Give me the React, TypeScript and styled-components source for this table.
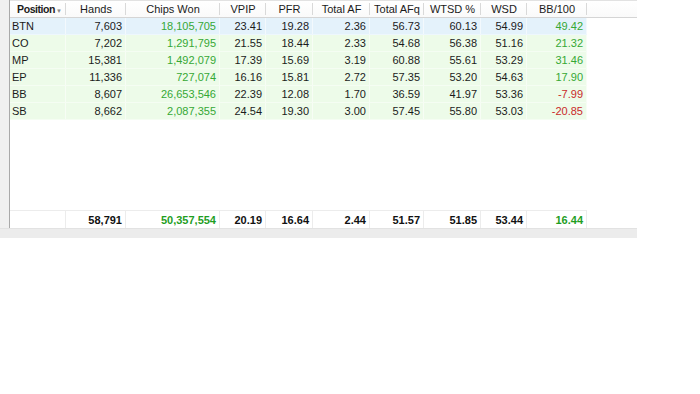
import React from "react";
import styled, { createGlobalStyle } from "styled-components";

const GlobalStyle = createGlobalStyle`
  html, body {
    margin: 0;
    padding: 0;
    background: #ffffff;
  }
  body {
    font-family: "Liberation Sans Narrow", "Liberation Sans", Arial, sans-serif;
    font-size: 11px;
    color: #1b1b1b;
  }
`;

const DATA_COLUMNS = "56px 60px 94px 46px 47px 57px 54px 57px 46px 60px";

const Frame = styled.div`
  width: 637px;
  display: flex;
  flex-direction: column;
`;

const Body = styled.div`
  display: flex;
  height: 228px;
`;

const Gutter = styled.div`
  width: 9px;
  background: #f0f0f0;
  border-right: 1px solid #a9a9a9;
`;

const Grid = styled.div`
  flex: 1;
  display: flex;
  flex-direction: column;
  align-items: flex-start;
`;

const HeaderRow = styled.div`
  align-self: stretch;
  display: grid;
  grid-template-columns: ${DATA_COLUMNS} 1fr;
  height: 18px;
  box-sizing: border-box;
  border-top: 1px solid #e2e2e2;
  border-bottom: 1px solid #d5d5d5;
  background: linear-gradient(#ffffff, #fafafa);
`;

const HeaderCell = styled.div<{ $sorted?: boolean; $last?: boolean }>`
  position: relative;
  display: flex;
  align-items: center;
  justify-content: center;
  white-space: nowrap;
  color: #1b1b1b;
  font-weight: ${(p) => (p.$sorted ? "bold" : "normal")};
  font-size: ${(p) => (p.$sorted ? "10.5px" : "11px")};
  letter-spacing: ${(p) => (p.$sorted ? "-0.45px" : "0")};
  padding-left: ${(p) => (p.$sorted ? "3px" : "0")};
  &::after {
    content: "";
    display: ${(p) => (p.$last ? "none" : "block")};
    position: absolute;
    right: 0;
    top: 2px;
    bottom: 2px;
    width: 1px;
    background: #d9d9d9;
  }
`;

const SortArrow = styled.span`
  font-size: 6px;
  font-weight: normal;
  letter-spacing: 0;
  color: #8a8a8a;
  margin-left: 1px;
  margin-top: 3px;
`;

const DataRow = styled.div<{ $selected?: boolean }>`
  display: grid;
  grid-template-columns: ${DATA_COLUMNS};
  height: 17px;
  box-sizing: border-box;
  background: ${(p) => (p.$selected ? "#e4f2fb" : "#edfbe9")};
  border-bottom: 1px solid ${(p) => (p.$selected ? "#eef7fd" : "#f5fdf3")};
`;

const Cell = styled.div<{ $align?: "left" | "right"; $tone?: "pos" | "neg" | "plain" }>`
  display: flex;
  align-items: center;
  justify-content: ${(p) => (p.$align === "left" ? "flex-start" : "flex-end")};
  padding: 0 3px 0 2px;
  border-right: 1px solid rgba(255, 255, 255, 0.55);
  white-space: nowrap;
  color: ${(p) => (p.$tone === "pos" ? "#35a835" : p.$tone === "neg" ? "#c92a2a" : "#1b1b1b")};
`;

const Spacer = styled.div`
  flex: 1;
`;

const FooterRow = styled.div`
  display: grid;
  grid-template-columns: ${DATA_COLUMNS};
  height: 17px;
  border-top: 1px solid #ececec;
  background: #ffffff;
`;

const FooterCell = styled(Cell)`
  font-weight: bold;
  color: ${(p) => (p.$tone === "pos" ? "#1f9e1f" : "#111111")};
  border-right: 1px solid #ececec;
`;

const ScrollBar = styled.div`
  height: 9px;
  background: #ececec;
  border-top: 1px solid #e2e2e2;
`;

type Tone = "pos" | "neg" | "plain";

interface IRow {
  position: string;
  hands: string;
  chips: string;
  vpip: string;
  pfr: string;
  af: string;
  afq: string;
  wtsd: string;
  wsd: string;
  bb: string;
}

const headers = [
  "Hands",
  "Chips Won",
  "VPIP",
  "PFR",
  "Total AF",
  "Total AFq",
  "WTSD %",
  "WSD",
  "BB/100",
];

const rows: IRow[] = [
  { position: "BTN", hands: "7,603", chips: "18,105,705", vpip: "23.41", pfr: "19.28", af: "2.36", afq: "56.73", wtsd: "60.13", wsd: "54.99", bb: "49.42" },
  { position: "CO", hands: "7,202", chips: "1,291,795", vpip: "21.55", pfr: "18.44", af: "2.33", afq: "54.68", wtsd: "56.38", wsd: "51.16", bb: "21.32" },
  { position: "MP", hands: "15,381", chips: "1,492,079", vpip: "17.39", pfr: "15.69", af: "3.19", afq: "60.88", wtsd: "55.61", wsd: "53.29", bb: "31.46" },
  { position: "EP", hands: "11,336", chips: "727,074", vpip: "16.16", pfr: "15.81", af: "2.72", afq: "57.35", wtsd: "53.20", wsd: "54.63", bb: "17.90" },
  { position: "BB", hands: "8,607", chips: "26,653,546", vpip: "22.39", pfr: "12.08", af: "1.70", afq: "36.59", wtsd: "41.97", wsd: "53.36", bb: "-7.99" },
  { position: "SB", hands: "8,662", chips: "2,087,355", vpip: "24.54", pfr: "19.30", af: "3.00", afq: "57.45", wtsd: "55.80", wsd: "53.03", bb: "-20.85" },
];

const totals: IRow = {
  position: "",
  hands: "58,791",
  chips: "50,357,554",
  vpip: "20.19",
  pfr: "16.64",
  af: "2.44",
  afq: "51.57",
  wtsd: "51.85",
  wsd: "53.44",
  bb: "16.44",
};

const tone = (value: string): Tone => (value.startsWith("-") ? "neg" : "pos");

export default function App() {
  return (
    <Frame>
      <GlobalStyle />
      <Body>
        <Gutter />
        <Grid>
          <HeaderRow>
            <HeaderCell $sorted>
              Position<SortArrow>▼</SortArrow>
            </HeaderCell>
            {headers.map((h) => (
              <HeaderCell key={h}>{h}</HeaderCell>
            ))}
            <HeaderCell $last />
          </HeaderRow>

          {rows.map((r, i) => (
            <DataRow key={r.position} $selected={i === 0}>
              <Cell $align="left">{r.position}</Cell>
              <Cell>{r.hands}</Cell>
              <Cell $tone={tone(r.chips)}>{r.chips}</Cell>
              <Cell>{r.vpip}</Cell>
              <Cell>{r.pfr}</Cell>
              <Cell>{r.af}</Cell>
              <Cell>{r.afq}</Cell>
              <Cell>{r.wtsd}</Cell>
              <Cell>{r.wsd}</Cell>
              <Cell $tone={tone(r.bb)}>{r.bb}</Cell>
            </DataRow>
          ))}

          <Spacer />

          <FooterRow>
            <FooterCell $align="left">{totals.position}</FooterCell>
            <FooterCell>{totals.hands}</FooterCell>
            <FooterCell $tone="pos">{totals.chips}</FooterCell>
            <FooterCell>{totals.vpip}</FooterCell>
            <FooterCell>{totals.pfr}</FooterCell>
            <FooterCell>{totals.af}</FooterCell>
            <FooterCell>{totals.afq}</FooterCell>
            <FooterCell>{totals.wtsd}</FooterCell>
            <FooterCell>{totals.wsd}</FooterCell>
            <FooterCell $tone="pos">{totals.bb}</FooterCell>
          </FooterRow>
        </Grid>
      </Body>
      <ScrollBar />
    </Frame>
  );
}
